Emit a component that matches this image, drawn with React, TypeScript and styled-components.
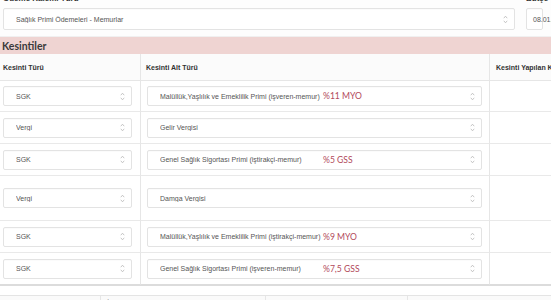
import React from 'react';
import styled, { createGlobalStyle } from 'styled-components';

const GlobalStyle = createGlobalStyle`
  html, body {
    margin: 0;
    padding: 0;
    background: #ffffff;
    font-family: 'Liberation Sans', Arial, sans-serif;
    color: #555;
    overflow: hidden;
  }
`;

const Page = styled.div`
  width: 551px;
  overflow: hidden;
`;

const TopRow = styled.div`
  display: grid;
  grid-template-columns: 523px 1fr;
  margin-top: -7px;
  padding-bottom: 6px;
  background: #fdfdfd;
  border-bottom: 1px solid #f0f0f0;
`;

const FieldGroup = styled.div<{ $pad?: number }>`
  display: flex;
  flex-direction: column;
  gap: 3px;
  padding-left: ${(p) => p.$pad ?? 3}px;
  padding-right: 8px;
  overflow: hidden;
`;

const FieldLabel = styled.label`
  font-weight: bold;
  font-size: 8px;
  line-height: 12px;
  color: #333;
  white-space: nowrap;
`;

const SelectBox = styled.div<{ $h?: number }>`
  display: flex;
  align-items: center;
  height: ${(p) => p.$h ?? 18}px;
  border: 1px solid #e3e3e3;
  border-radius: 2px;
  background: #fff;
  padding: 0 6px 0 12px;
  font-size: 7px;
  color: #555;
  white-space: nowrap;
  box-shadow: inset 0 1px 1px rgba(0, 0, 0, 0.02);
`;

const SelectText = styled.div<{ $noted?: boolean }>`
  flex: 1;
  min-width: 0;
  display: grid;
  grid-template-columns: ${(p) => (p.$noted ? '163px auto' : '1fr')};
  align-items: center;
  overflow: hidden;
`;

const Note = styled.span`
  font-family: Lato, 'Liberation Sans', sans-serif;
  font-size: 8.6px;
  color: #b24a5b;
`;

const SectionBar = styled.div`
  background: #efd4d2;
  height: 17px;
  display: flex;
  align-items: center;
  padding-left: 2px;
  font-family: Lato, 'Liberation Sans', sans-serif;
  font-weight: bold;
  font-size: 10.5px;
  color: #3a3a3a;
`;

const Grid = styled.div`
  display: grid;
  grid-template-columns: 141px 349px 1fr;
`;

const HeadCell = styled.div`
  height: 26px;
  display: flex;
  align-items: center;
  padding-left: 3px;
  background: #fbfbfb;
  border-bottom: 1px solid #e6e6e6;
  border-right: 1px solid #e6e6e6;
  font-weight: bold;
  font-size: 7px;
  color: #333;
  white-space: nowrap;
  overflow: hidden;
  &:nth-child(2) {
    padding-left: 5px;
  }
  &:nth-child(3) {
    border-right: none;
    padding-left: 6px;
  }
`;

const Cell = styled.div<{ $h: number; $last?: boolean; $first?: boolean }>`
  height: ${(p) => p.$h}px;
  box-sizing: border-box;
  display: flex;
  align-items: center;
  min-width: 0;
  padding: 0 ${(p) => (p.$first ? 8 : 7)}px 0 ${(p) => (p.$first ? 3 : 6)}px;
  border-bottom: 1px solid ${(p) => (p.$last ? '#dcdcdc' : '#e9e9e9')};
  border-right: 1px solid #e6e6e6;
  & > div {
    flex: 1;
    min-width: 0;
  }
`;

const EmptyCell = styled.div<{ $h: number; $last?: boolean }>`
  height: ${(p) => p.$h}px;
  box-sizing: border-box;
  border-bottom: 1px solid ${(p) => (p.$last ? '#dcdcdc' : '#e9e9e9')};
`;

const Gap = styled.div`
  height: 9px;
  border-top: 1px solid #dcdcdc;
  border-bottom: 1px solid #e4e4e4;
`;

const FootRow = styled.div`
  display: grid;
  grid-template-columns: 101px 165px 142px 1fr;
  height: 20px;
  background: #fafafa;
`;

const FootCell = styled.div`
  border-right: 1px solid #e6e6e6;
  font-size: 8px;
  color: #333;
  padding: 3px 0 0 6px;
  &:last-child {
    border-right: none;
  }
`;

const Chevron = () => (
  <svg width="5" height="9" viewBox="0 0 5 9" fill="none" stroke="#b8b8b8" strokeWidth="0.8" style={{ flexShrink: 0 }}>
    <path d="M0.8 3.2 L2.5 1.2 L4.2 3.2" />
    <path d="M0.8 5.8 L2.5 7.8 L4.2 5.8" />
  </svg>
);

const Select = ({ text, note, h }: { text: string; note?: string; h?: number }) => (
  <SelectBox $h={h}>
    <SelectText $noted={!!note}>
      <span>{text}</span>
      {note && <Note>{note}</Note>}
    </SelectText>
    <Chevron />
  </SelectBox>
);

const rows = [
  { type: 'SGK', sub: 'Malüllük,Yaşlılık ve Emeklilik Primi (işveren-memur)', note: '%11 MYO', h: 31 },
  { type: 'Vergi', sub: 'Gelir Vergisi', h: 32 },
  { type: 'SGK', sub: 'Genel Sağlık Sigortası Primi (iştirakçi-memur)', note: '%5 GSS', h: 32 },
  { type: 'Vergi', sub: 'Damga Vergisi', h: 45 },
  { type: 'SGK', sub: 'Malüllük,Yaşlılık ve Emeklilik Primi (iştirakçi-memur)', note: '%9 MYO', h: 32 },
  { type: 'SGK', sub: 'Genel Sağlık Sigortası Primi (işveren-memur)', note: '%7,5 GSS', h: 32 },
];

const App = () => {
  return (
    <Page>
      <GlobalStyle />
      <TopRow>
        <FieldGroup>
          <FieldLabel>Ödeme Kalemi Türü</FieldLabel>
          <Select text="Sağlık Primi Ödemeleri - Memurlar" h={20} />
        </FieldGroup>
        <FieldGroup $pad={3}>
          <FieldLabel>Bütçe Tarihi</FieldLabel>
          <SelectBox $h={20} style={{ paddingLeft: 6 }}>08.01.2024</SelectBox>
        </FieldGroup>
      </TopRow>
      <SectionBar>Kesintiler</SectionBar>
      <Grid>
        <HeadCell>Kesinti Türü</HeadCell>
        <HeadCell>Kesinti Alt Türü</HeadCell>
        <HeadCell>Kesinti Yapılan Kalem</HeadCell>
        {rows.map((r, i) => {
          const last = i === rows.length - 1;
          return (
            <React.Fragment key={i}>
              <Cell $h={r.h} $first $last={last}>
                <Select text={r.type} />
              </Cell>
              <Cell $h={r.h} $last={last}>
                <Select text={r.sub} note={r.note} />
              </Cell>
              <EmptyCell $h={r.h} $last={last} />
            </React.Fragment>
          );
        })}
      </Grid>
      <Gap />
      <FootRow>
        <FootCell />
        <FootCell>İşlem</FootCell>
        <FootCell />
        <FootCell />
      </FootRow>
    </Page>
  );
};

export default App;
